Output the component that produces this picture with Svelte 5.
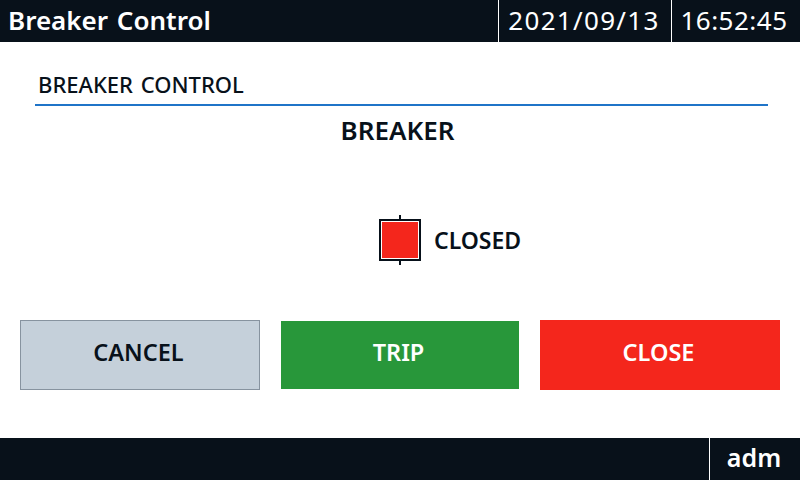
<script>
  let state = 'CLOSED';
</script>

<div class="screen">
  <header class="bar top">
    <div class="title">Breaker Control</div>
    <div class="cell date">2021/09/13</div>
    <div class="cell time">16:52:45</div>
  </header>

  <main>
    <div class="section">BREAKER CONTROL</div>
    <h1>BREAKER</h1>

    <div class="status">
      <div class="symbol">
        <span class="stem"></span>
        <span class="box"></span>
        <span class="stem"></span>
      </div>
      <span class="label">{state}</span>
    </div>

    <div class="actions">
      <button class="cancel">CANCEL</button>
      <button class="trip">TRIP</button>
      <button class="close">CLOSE</button>
    </div>
  </main>

  <footer class="bar bottom">
    <div class="cell user">adm</div>
  </footer>
</div>

<style>
  :global(body) {
    margin: 0;
    background: #fff;
  }

  .screen {
    width: 800px;
    height: 480px;
    display: flex;
    flex-direction: column;
    font-family: 'Noto Sans', sans-serif;
    color: #08111a;
    overflow: hidden;
  }

  .bar {
    height: 42px;
    flex: none;
    display: flex;
    background: #08111a;
    color: #fff;
  }

  .title {
    flex: 1;
    padding-left: 8px;
    font-size: 26px;
    font-weight: 600;
    line-height: 40px;
    word-spacing: 2px;
  }

  .cell {
    border-left: 1px solid #fff;
    box-sizing: border-box;
    text-align: center;
    font-size: 26px;
    line-height: 40px;
  }

  .date {
    width: 173px;
    padding-right: 2px;
    letter-spacing: 1.3px;
  }

  .time {
    width: 129px;
    padding-right: 4px;
    letter-spacing: 0.5px;
  }

  .bottom {
    justify-content: flex-end;
  }

  .user {
    width: 91px;
    padding-right: 2px;
    font-size: 25px;
    line-height: 39px;
    font-weight: 600;
  }

  main {
    flex: 1;
    display: flex;
    flex-direction: column;
    padding: 0 20px;
  }

  .section {
    margin: 28px 12px 0 15px;
    padding: 0 0 5px 3px;
    border-bottom: 2px solid #1f74c8;
    font-size: 22px;
    line-height: 29px;
    font-weight: 500;
    word-spacing: 2px;
  }

  h1 {
    margin: 8px 0 0;
    padding-right: 5px;
    text-align: center;
    font-size: 26px;
    line-height: 32px;
    font-weight: 600;
  }

  .status {
    margin-top: 69px;
    display: grid;
    grid-template-columns: 1fr auto 1fr;
    align-items: center;
    column-gap: 15px;
  }

  .symbol {
    grid-column: 2;
    display: flex;
    flex-direction: column;
    align-items: center;
  }

  .stem {
    width: 2px;
    height: 4px;
    background: #08111a;
  }

  .box {
    box-sizing: content-box;
    width: 36px;
    height: 36px;
    margin: 2px 0;
    background: #f4261c;
    border: 1px solid #fff;
    outline: 2px solid #08111a;
  }

  .label {
    font-size: 23px;
    font-weight: 600;
    line-height: 30px;
  }

  .actions {
    margin-top: 55px;
    display: flex;
    gap: 20px;
  }

  button {
    width: 240px;
    height: 70px;
    padding: 0 3px 6px 0;
    border: 1px solid transparent;
    background-clip: padding-box;
    font-family: inherit;
    font-size: 23.5px;
    font-weight: 600;
  }

  .cancel {
    background: #c5d0da;
    border-color: #87939f;
    color: #08111a;
  }

  .trip {
    background: #28973a;
    background-clip: padding-box;
    color: #fff;
  }

  .close {
    background: #f4261c;
    border-color: #f4261c;
    color: #fff;
  }
</style>
